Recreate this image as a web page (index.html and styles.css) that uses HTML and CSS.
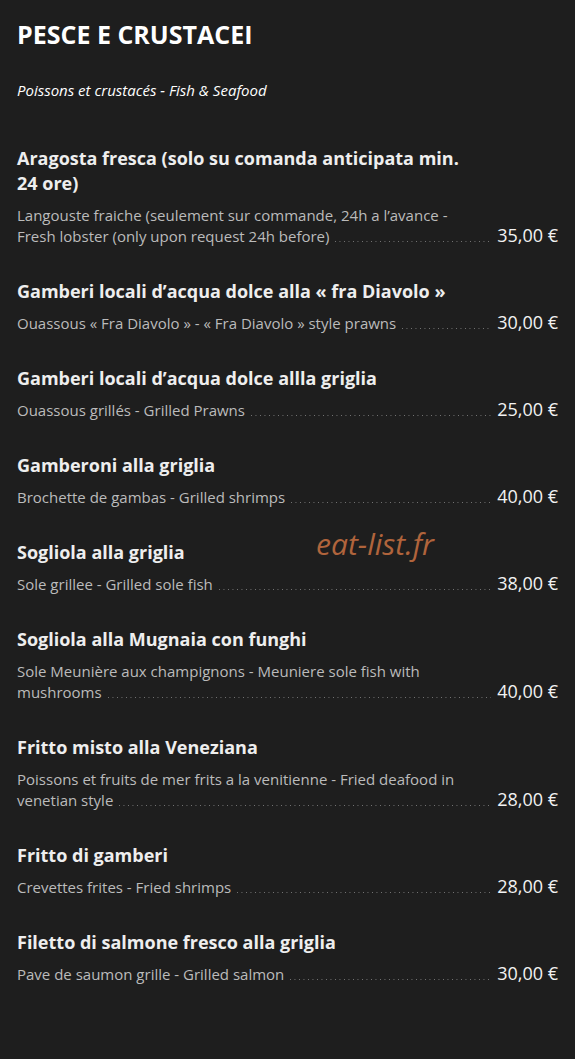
FILE: index.html
```html
<!DOCTYPE html>
<html lang="fr">
<head>
    <meta charset="UTF-8">
    <meta name="viewport" content="width=device-width, initial-scale=1.0">
    <title>Pesce e crustacei</title>
    <link rel="stylesheet" href="styles.css">
</head>
<body>
    <div class="menu">
        <h2 class="title">PESCE E CRUSTACEI</h2>
        <p class="subtitle">Poissons et crustacés - Fish &amp; Seafood</p>

        <div class="item">
            <h3 class="name">Aragosta fresca (solo su comanda anticipata min. 24 ore)</h3>
            <p class="desc-top">Langouste fraiche (seulement sur commande, 24h a l’avance -</p>
            <div class="row">
                <span class="desc">Fresh lobster (only upon request 24h before)</span>
                <span class="dots"></span>
                <span class="price">35,00 €</span>
            </div>
        </div>

        <div class="item">
            <h3 class="name">Gamberi locali d’acqua dolce alla « fra Diavolo »</h3>
            <div class="row">
                <span class="desc">Ouassous « Fra Diavolo » - « Fra Diavolo » style prawns</span>
                <span class="dots"></span>
                <span class="price">30,00 €</span>
            </div>
        </div>

        <div class="item">
            <h3 class="name">Gamberi locali d’acqua dolce allla griglia</h3>
            <div class="row">
                <span class="desc">Ouassous grillés - Grilled Prawns</span>
                <span class="dots"></span>
                <span class="price">25,00 €</span>
            </div>
        </div>

        <div class="item">
            <h3 class="name">Gamberoni alla griglia</h3>
            <div class="row">
                <span class="desc">Brochette de gambas - Grilled shrimps</span>
                <span class="dots"></span>
                <span class="price">40,00 €</span>
            </div>
        </div>

        <div class="item">
            <h3 class="name">Sogliola alla griglia</h3>
            <div class="row">
                <span class="desc">Sole grillee - Grilled sole fish</span>
                <span class="dots"></span>
                <span class="price">38,00 €</span>
            </div>
            <span class="watermark">eat-list.fr</span>
        </div>

        <div class="item">
            <h3 class="name">Sogliola alla Mugnaia con funghi</h3>
            <p class="desc-top">Sole Meunière aux champignons - Meuniere sole fish with</p>
            <div class="row">
                <span class="desc">mushrooms</span>
                <span class="dots"></span>
                <span class="price">40,00 €</span>
            </div>
        </div>

        <div class="item">
            <h3 class="name">Fritto misto alla Veneziana</h3>
            <p class="desc-top">Poissons et fruits de mer frits a la venitienne - Fried deafood in</p>
            <div class="row">
                <span class="desc">venetian style</span>
                <span class="dots"></span>
                <span class="price">28,00 €</span>
            </div>
        </div>

        <div class="item">
            <h3 class="name">Fritto di gamberi</h3>
            <div class="row">
                <span class="desc">Crevettes frites - Fried shrimps</span>
                <span class="dots"></span>
                <span class="price">28,00 €</span>
            </div>
        </div>

        <div class="item">
            <h3 class="name">Filetto di salmone fresco alla griglia</h3>
            <div class="row">
                <span class="desc">Pave de saumon grille - Grilled salmon</span>
                <span class="dots"></span>
                <span class="price">30,00 €</span>
            </div>
        </div>
    </div>
</body>
</html>
```

FILE: styles.css
```css
body {
    margin: 0;
    background-color: #1e1e1e;
    font-family: "Open Sans", Arial, sans-serif;
    color: #eeeeee;
}
.menu {
    padding: 20px 17px 40px 17px;
}
.title {
    margin: 0;
    font-size: 25px;
    font-weight: 700;
    line-height: 28px;
    color: #ffffff;
}
.subtitle {
    margin: 32px 0 0 0;
    font-size: 15px;
    font-style: italic;
    line-height: 21px;
    color: #ffffff;
}
.item {
    position: relative;
    margin-top: 45px;
}
.item + .item {
    margin-top: 32px;
}
.name {
    margin: 0 0 9px 0;
    padding-right: 80px;
    font-size: 18px;
    font-weight: 700;
    line-height: 25px;
    color: #eeeeee;
}
.desc-top {
    margin: 0;
    font-size: 15px;
    line-height: 21px;
    color: #bbbbbb;
}
.row {
    display: flex;
    align-items: baseline;
    height: 21px;
}
.desc {
    font-size: 15px;
    line-height: 21px;
    color: #bbbbbb;
    white-space: nowrap;
}
.dots {
    flex: 1;
    height: 1px;
    margin: 0 6px 0 6px;
    background-image: linear-gradient(to right, #777777 1px, transparent 1px);
    background-size: 4.5px 1px;
    background-repeat: repeat-x;
}
.price {
    font-size: 18px;
    line-height: 18px;
    color: #f2f2f2;
}
.watermark {
    position: absolute;
    left: 299px;
    top: -17px;
    font-size: 30px;
    font-style: italic;
    color: #b0643c;
}
```
